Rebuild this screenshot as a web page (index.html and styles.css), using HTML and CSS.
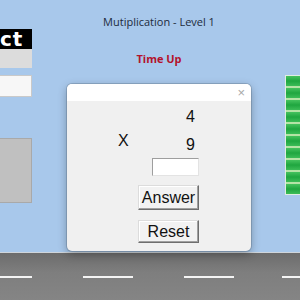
FILE: index.html
```html
<!DOCTYPE html>
<html lang="en">
<head>
  <meta charset="utf-8" />
  <title>Mutiplication - Level 1</title>
  <link rel="stylesheet" href="styles.css">
</head>
<body>
  <div class="scene">
    <header class="top">
      <h1 class="level">Mutiplication - Level 1</h1>
      <p class="status">Time Up</p>
    </header>

    <!-- left side panel (cut off by the window) -->
    <div class="side">
      <div class="side-head">ct</div>
      <div class="side-grey"></div>
      <div class="side-field"></div>
    </div>
    <div class="car"></div>

    <!-- progress meter on the right -->
    <div class="meter">
      <span></span><span></span><span></span><span></span><span></span>
      <span></span><span></span><span></span><span></span><span></span>
    </div>

    <div class="road"><div class="lane"></div></div>

    <div class="dialog">
      <div class="dialog-bar"><span class="close">&times;</span></div>
      <div class="dialog-body">
        <div class="sum">
          <span class="n1">4</span>
          <span class="op">X</span>
          <span class="n2">9</span>
        </div>
        <input class="answer-box" type="text">
        <button class="btn btn-answer">Answer</button>
        <button class="btn btn-reset">Reset</button>
      </div>
    </div>
  </div>
</body>
</html>
```

FILE: styles.css
```css
body {
  margin: 0;
  background: #a8c8eb;
  font-family: "Liberation Sans", Arial, sans-serif;
}

.scene {
  position: relative;
  width: 300px;
  height: 300px;
  overflow: hidden;
}

.top {
  display: flex;
  flex-direction: column;
  align-items: center;
  padding: 14px 0 0 18px;
}
.level {
  margin: 0;
  font-family: "Open Sans", sans-serif;
  font-weight: normal;
  font-size: 11px;
  color: #1d2b3c;
}
.status {
  margin: 22px 0 0;
  font-family: "Open Sans", sans-serif;
  font-weight: bold;
  font-size: 11px;
  color: #b3122c;
}

/* left panel */
.side {
  position: absolute;
  left: 0;
  top: 29px;
  width: 32px;
  display: flex;
  flex-direction: column;
}
.side-head {
  height: 20px;
  background: #000;
  color: #fff;
  font-family: "DejaVu Sans", sans-serif;
  font-weight: bold;
  font-size: 20px;
  line-height: 20px;
  letter-spacing: 1px;
  white-space: nowrap;
}
.side-grey {
  height: 19px;
  background: #dcdcdc;
}
.side-field {
  height: 20px;
  margin-top: 7px;
  background: #f7f7f7;
  border: 1px solid #c9c9c9;
  border-left: 0;
}
.car {
  position: absolute;
  left: 0;
  top: 138px;
  width: 31px;
  height: 63px;
  background: #c0c0c0;
  border: 1px solid #a9a9a9;
  border-left: 0;
}

/* meter */
.meter {
  position: absolute;
  left: 285px;
  top: 75px;
  width: 20px;
  height: 118px;
  border: 1px solid #dfeee0;
  display: flex;
  flex-direction: column;
  gap: 2px;
  background: #b5e3a6;
}
.meter span {
  flex: 1;
  background: linear-gradient(#45c25e, #1fa63f 50%, #3cbc57);
}

/* road */
.road {
  position: absolute;
  left: 0;
  top: 252px;
  width: 300px;
  height: 48px;
  border-top: 1px solid #cfd5db;
  background: linear-gradient(#6c6c6c, #7e7e7e 40%, #858585);
}
.lane {
  margin-top: 23px;
  height: 2px;
  background: repeating-linear-gradient(90deg, #f4f4f4 0 50px, transparent 50px 101px);
  background-position: -18px 0;
}

/* dialog */
.dialog {
  position: absolute;
  left: 67px;
  top: 84px;
  width: 184px;
  height: 167px;
  background: #f0f0f0;
  border-radius: 5px;
  box-shadow: 0 0 0 1px rgba(90, 110, 130, 0.35), 0 3px 10px rgba(0, 0, 0, 0.3);
  overflow: hidden;
}
.dialog-bar {
  height: 17px;
  background: #fff;
  display: flex;
  justify-content: flex-end;
  align-items: center;
  padding-right: 6px;
}
.close {
  color: #a8a8a8;
  font-size: 13px;
  line-height: 1;
}
.dialog-body {
  display: flex;
  flex-direction: column;
  align-items: flex-start;
}
.sum {
  display: grid;
  grid-template-columns: 51px 10px 58px 8px;
  grid-template-rows: 28px 22px;
  margin-top: 6px;
  font-size: 16px;
  color: #111;
}
.n1 {
  grid-column: 4;
  grid-row: 1;
  text-align: center;
  line-height: 20px;
}
.op {
  grid-column: 2;
  grid-row: 2;
  margin-top: -4px;
  text-align: center;
  line-height: 20px;
}
.n2 {
  grid-column: 4;
  grid-row: 2;
  text-align: center;
  line-height: 20px;
}
.answer-box {
  box-sizing: border-box;
  width: 47px;
  height: 18px;
  margin: 1px 0 0 85px;
  padding: 0;
  background: #fff;
  border: 1px solid;
  border-color: #9e9e9e #e3e3e3 #e3e3e3 #9e9e9e;
}
.btn {
  box-sizing: border-box;
  width: 61px;
  margin-left: 71px;
  padding: 0;
  background: #f2f2f2;
  font-family: "Liberation Sans", Arial, sans-serif;
  font-size: 16px;
  color: #111;
  border: 1px solid;
  border-color: #dcdcdc #6e6e6e #6e6e6e #dcdcdc;
  box-shadow: inset -1px -1px 0 #a0a0a0, inset 1px 1px 0 #fff;
}
.btn-answer {
  height: 25px;
  margin-top: 9px;
}
.btn-reset {
  height: 23px;
  margin-top: 10px;
}
```
